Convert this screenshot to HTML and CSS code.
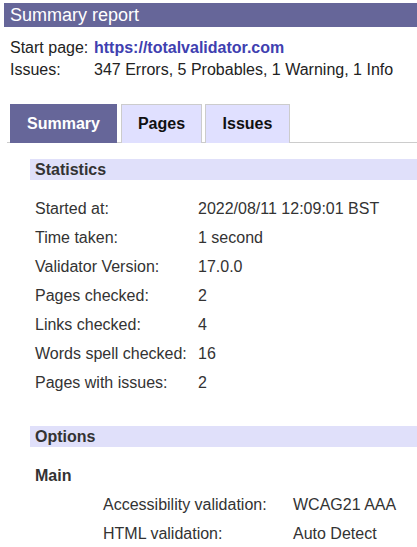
FILE: index.html
```html
<!DOCTYPE html>
<html>
<head>
<meta charset="utf-8">
<link rel="stylesheet" href="styles.css">
</head>
<body>
<div class="page">
  <h1 class="title">Summary report</h1>
  <div class="meta">
    <div class="meta-row"><span class="meta-label">Start page:</span><a class="link" href="#">https://totalvalidator.com</a></div>
    <div class="meta-row"><span class="meta-label">Issues:</span><span>347 Errors, 5 Probables, 1 Warning, 1 Info</span></div>
  </div>
  <div class="tabs">
    <div class="tab active">Summary</div>
    <div class="tab tab-pages">Pages</div>
    <div class="tab tab-issues">Issues</div>
  </div>
  <div class="content">
    <h2 class="section">Statistics</h2>
    <div class="stats">
      <div class="row"><span class="lbl">Started at:</span><span>2022/08/11 12:09:01 BST</span></div>
      <div class="row"><span class="lbl">Time taken:</span><span>1 second</span></div>
      <div class="row"><span class="lbl">Validator Version:</span><span>17.0.0</span></div>
      <div class="row"><span class="lbl">Pages checked:</span><span>2</span></div>
      <div class="row"><span class="lbl">Links checked:</span><span>4</span></div>
      <div class="row"><span class="lbl">Words spell checked:</span><span>16</span></div>
      <div class="row"><span class="lbl">Pages with issues:</span><span>2</span></div>
    </div>
    <h2 class="section options">Options</h2>
    <h3 class="sub">Main</h3>
    <div class="opts">
      <div class="row"><span class="olbl">Accessibility validation:</span><span>WCAG21 AAA</span></div>
      <div class="row"><span class="olbl">HTML validation:</span><span>Auto Detect</span></div>
    </div>
  </div>
</div>
</body>
</html>
```
FILE: styles.css
```css
html, body {
  margin: 0;
  padding: 0;
  background: #fff;
}
body {
  font-family: "Liberation Sans", Arial, sans-serif;
  font-size: 16px;
  color: #222;
}
.page {
  padding: 3px 0 0 4px;
}
.title {
  margin: 0;
  height: 24px;
  line-height: 24px;
  background: #666699;
  color: #fff;
  font-size: 18px;
  font-weight: normal;
  padding-left: 6px;
}
.meta {
  padding: 10px 0 0 6px;
}
.meta-row {
  display: flex;
  height: 22px;
  line-height: 22px;
}
.meta-label {
  width: 84px;
}
.link {
  color: #4040b0;
  font-weight: bold;
  text-decoration: none;
}
.tabs {
  display: flex;
  margin: 23px 0 0 3px;
  border-bottom: 1px solid #cccccc;
  padding-left: 3px;
  height: 38px;
}
.tab {
  box-sizing: border-box;
  height: 39px;
  border: 1px solid #cccccc;
  border-bottom: none;
  background: #e0e0ff;
  color: #111;
  font-weight: bold;
  text-align: center;
  line-height: 38px;
  margin-right: 3px;
}
.tab.active {
  width: 107px;
  background: #666699;
  border-color: #666699;
  color: #fff;
  margin-right: 4px;
}
.tab-pages {
  width: 81px;
}
.tab-issues {
  width: 85px;
}
.content {
  padding: 16px 0 0 26px;
}
.section {
  margin: 0;
  height: 21px;
  line-height: 21px;
  background: #e0e0fa;
  color: #333;
  font-size: 16px;
  font-weight: bold;
  padding-left: 5px;
}
.stats {
  padding: 14px 0 0 5px;
}
.row {
  display: flex;
  height: 29px;
  line-height: 29px;
  color: #333;
}
.lbl {
  width: 163px;
}
.options {
  margin-top: 29px;
}
.sub {
  margin: 0;
  padding: 14px 0 0 5px;
  height: 29px;
  line-height: 29px;
  font-size: 16px;
  font-weight: bold;
  color: #333;
}
.opts {
  padding-left: 73px;
}
.olbl {
  width: 190px;
}
```
